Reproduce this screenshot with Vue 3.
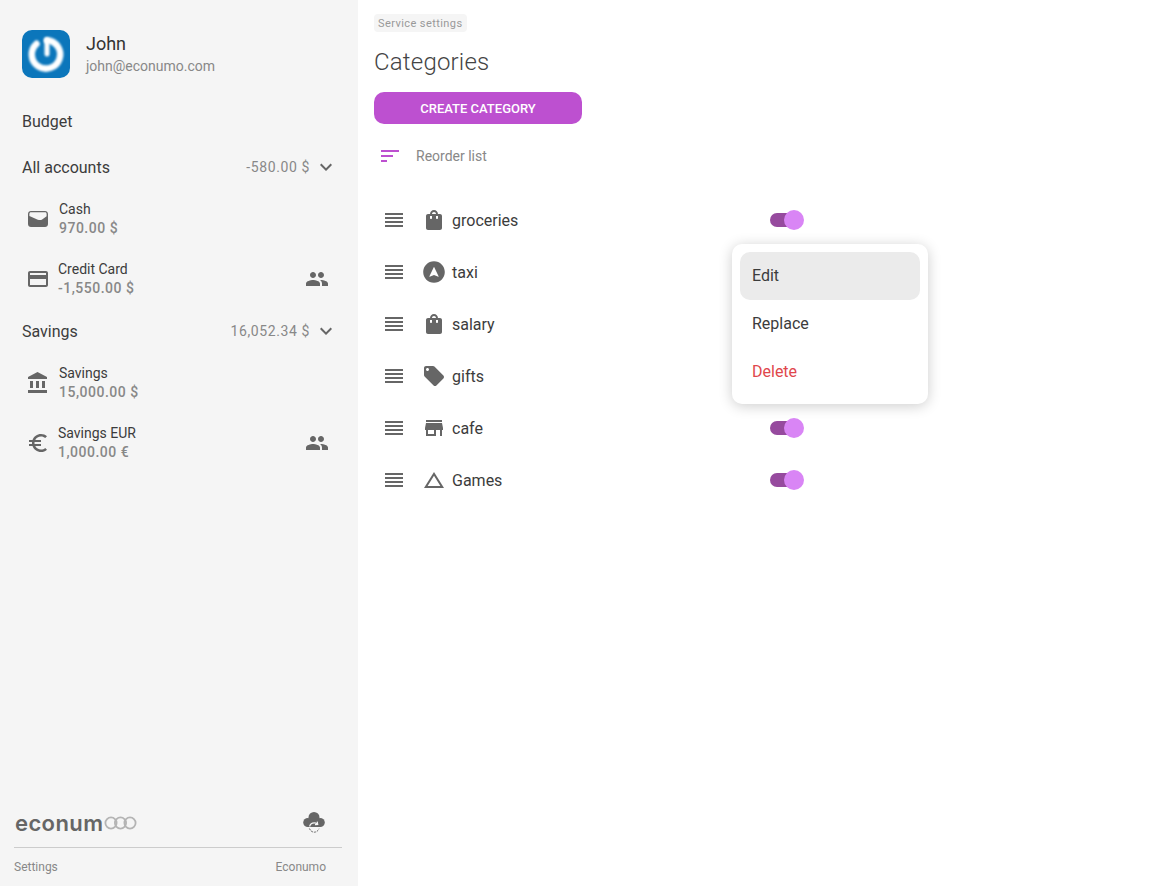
<script setup>
const icons = {
  bag: "M18 6h-2c0-2.21-1.79-4-4-4S8 3.79 8 6H6c-1.1 0-2 .9-2 2v12c0 1.1.9 2 2 2h12c1.1 0 2-.9 2-2V8c0-1.1-.9-2-2-2zm-8 4c0 .55-.45 1-1 1s-1-.45-1-1V8h2v2zm2-6c1.1 0 2 .9 2 2h-4c0-1.1.9-2 2-2zm4 6c0 .55-.45 1-1 1s-1-.45-1-1V8h2v2z",
  nav: "M12 1.2C6.04 1.2 1.2 6.04 1.2 12S6.04 22.8 12 22.8 22.8 17.96 22.8 12 17.96 1.2 12 1.2zm4.3 15.6L12 15l-4.3 1.8-.4-.4L12 6.8l4.7 9.6-.4.4z",
  tag: "M21.41 11.58l-9-9C12.05 2.22 11.55 2 11 2H4c-1.1 0-2 .9-2 2v7c0 .55.22 1.05.59 1.42l9 9c.36.36.86.58 1.41.58.55 0 1.05-.22 1.41-.59l7-7c.37-.36.59-.86.59-1.41 0-.55-.23-1.06-.59-1.42zM5.5 7C4.67 7 4 6.33 4 5.5S4.67 4 5.5 4 7 4.67 7 5.5 6.33 7 5.5 7z",
  store: "M20 4H4v2h16V4zm1 10v-2l-1-5H4l-1 5v2h1v6h10v-6h4v6h2v-6h1zm-9 4H6v-4h6v4z",
  triangle: "M12 7.77L18.39 18H5.61L12 7.77M12 4L2 20h20L12 4z",
  wallet: "M5 4h14c1.7 0 3 1.3 3 3v10c0 1.7-1.3 3-3 3H5c-1.7 0-3-1.3-3-3V7c0-1.7 1.3-3 3-3zM5 5.300c-.9 0-1.600.7-1.600 1.600V9l8.400 3.700c1.500.5 2.800.5 4 0l4.800-3.400V6.900c0-.9-.7-1.600-1.600-1.600H5z",
  card: "M20 4H4c-1.11 0-1.99.89-1.99 2L2 18c0 1.11.89 2 2 2h16c1.11 0 2-.89 2-2V6c0-1.11-.89-2-2-2zm0 14H4v-6h16v6zm0-10H4V6h16v2z",
  bank: "M4 10v7h3v-7H4zm6 0v7h3v-7h-3zM2 22h19v-3H2v3zm14-12v7h3v-7h-3zm-4.5-9L2 6v2h19V6l-9.5-5z",
  euro: "M15 18.5c-2.51 0-4.68-1.42-5.76-3.5H15v-2H8.58c-.05-.33-.08-.66-.08-1s.03-.67.08-1H15V9H9.24C10.32 6.92 12.5 5.5 15 5.5c1.61 0 3.09.59 4.23 1.57L21 5.3C19.41 3.87 17.3 3 15 3c-3.92 0-7.24 2.51-8.48 6H3v2h3.06c-.04.33-.06.66-.06 1 0 .34.02.67.06 1H3v2h3.52c1.24 3.49 4.56 6 8.48 6 2.31 0 4.41-.87 6-2.3l-1.78-1.77c-1.13.98-2.6 1.57-4.22 1.57z",
  people: "M16 11c1.66 0 2.99-1.34 2.99-3S17.66 5 16 5c-1.66 0-3 1.34-3 3s1.34 3 3 3zm-8 0c1.66 0 2.99-1.34 2.99-3S9.66 5 8 5C6.34 5 5 6.34 5 8s1.34 3 3 3zm0 2c-2.33 0-7 1.17-7 3.5V19h14v-2.5c0-2.33-4.67-3.5-7-3.5zm8 0c-.29 0-.62.02-.97.05 1.16.84 1.97 1.97 1.97 3.45V19h6v-2.5c0-2.33-4.67-3.5-7-3.5z",
  chevron: "M16.59 8.59L12 13.17 7.41 8.59 6 10l6 6 6-6z",
  sort: "M3 18h6v-2H3v2zM3 6v2h18V6H3zm0 7h12v-2H3v2z",
  drag: "M3 15h18v-2H3v2zm0 4h18v-2H3v2zm0-8h18V9H3v2zm0-6v2h18V5H3z",
};

const groups = [
  {
    name: "All accounts",
    total: "-580.00 $",
    accounts: [
      { name: "Cash", amount: "970.00 $", icon: "wallet", shared: false, narrow: false },
      { name: "Credit Card", amount: "-1,550.00 $", icon: "card", shared: true, narrow: true },
    ],
  },
  {
    name: "Savings",
    total: "16,052.34 $",
    accounts: [
      { name: "Savings", amount: "15,000.00 $", icon: "bank", shared: false, narrow: false },
      { name: "Savings EUR", amount: "1,000.00 €", icon: "euro", shared: true, narrow: true },
    ],
  },
];

const categories = [
  { name: "groceries", icon: "bag" },
  { name: "taxi", icon: "nav" },
  { name: "salary", icon: "bag" },
  { name: "gifts", icon: "tag" },
  { name: "cafe", icon: "store" },
  { name: "Games", icon: "triangle" },
];
</script>

<template>
  <div class="app">
    <aside class="sidebar">
      <div class="profile">
        <div class="avatar">
          <svg width="48" height="48" viewBox="0 0 48 48">
            <path class="power" d="M14.5 13.8A14.200 14.200 0 1 0 25 10.200" />
            <path class="power stem" d="M25 10.200V24" />
          </svg>
        </div>
        <div class="profile-text">
          <div class="profile-name">John</div>
          <div class="profile-mail">john@econumo.com</div>
        </div>
      </div>

      <div class="budget">Budget</div>

      <section v-for="group in groups" :key="group.name">
        <div class="group-head">
          <span class="group-name">{{ group.name }}</span>
          <span class="group-total">{{ group.total }}</span>
          <svg class="icon chevron" viewBox="0 0 24 24"><path :d="icons.chevron" /></svg>
        </div>
        <div class="account" v-for="acc in group.accounts" :key="acc.name">
          <svg class="icon account-icon" viewBox="0 0 24 24"><path :d="icons[acc.icon]" /></svg>
          <div class="account-text" :class="{ narrow: acc.narrow }">
            <div class="account-name">{{ acc.name }}</div>
            <div class="account-amount">{{ acc.amount }}</div>
          </div>
          <svg v-if="acc.shared" class="icon shared" viewBox="0 0 24 24"><path :d="icons.people" /></svg>
        </div>
      </section>

      <footer class="side-footer">
        <div class="brand">
          <span class="logo-text">econum</span>
          <svg class="logo-rings" width="33" height="14" viewBox="0 0 33 14">
            <circle cx="7" cy="7" r="5.6" />
            <circle cx="16.5" cy="7" r="5.6" />
            <circle cx="26" cy="7" r="5.6" />
          </svg>
          <svg class="cloud" width="24" height="24" viewBox="0 0 24 24">
            <circle cx="12" cy="6.500" r="5.500" />
            <circle cx="5.800" cy="11.500" r="4.600" />
            <circle cx="18.200" cy="11.500" r="4.600" />
            <rect x="5.800" y="8" width="12.400" height="8" />
            <path class="sync" d="M7.600 15.500c.6-2.300 2.400-3.700 4.600-3.700 1.300 0 2.400.5 3.300 1.300M16.800 15.500" />
            <path class="sync" d="M15.200 10.700l.5 2.700-2.700.2" />
            <path class="sync-dash" d="M7.400 17.500c1 2.300 2.800 3.700 4.900 3.700 2 0 3.900-1.300 4.700-3.500" />
          </svg>
        </div>
        <div class="side-links">
          <span>Settings</span>
          <span>Econumo</span>
        </div>
      </footer>
    </aside>

    <main class="content">
      <div class="crumb-row"><span class="crumb">Service settings</span></div>
      <h1 class="title">Categories</h1>
      <button class="create" type="button">Create category</button>
      <div class="reorder">
        <svg class="icon sort" viewBox="0 0 24 24"><path :d="icons.sort" /></svg>
        <span>Reorder list</span>
      </div>
      <ul class="list">
        <li class="row" v-for="cat in categories" :key="cat.name">
          <svg class="icon drag" viewBox="0 0 24 24"><path :d="icons.drag" /></svg>
          <svg class="icon cat-icon" viewBox="0 0 24 24"><path :d="icons[cat.icon]" /></svg>
          <span class="cat-name">{{ cat.name }}</span>
          <span class="toggle"><span class="thumb"></span></span>
        </li>
      </ul>

      <div class="menu">
        <div class="menu-item active">Edit</div>
        <div class="menu-item">Replace</div>
        <div class="menu-item danger">Delete</div>
      </div>
    </main>
  </div>
</template>

<style>
html,
body {
  margin: 0;
  background: #fff;
}
</style>

<style scoped>
.app {
  display: flex;
  height: 886px;
  overflow: hidden;
  font-family: Roboto, "Liberation Sans", sans-serif;
  color: #3c3c3c;
}

.icon {
  display: block;
  width: 24px;
  height: 24px;
  flex: none;
  fill: #666;
}

/* sidebar */
.sidebar {
  width: 358px;
  flex: none;
  box-sizing: border-box;
  padding-top: 30px;
  background: #f5f5f5;
  display: flex;
  flex-direction: column;
}

.profile {
  display: flex;
  align-items: center;
  height: 48px;
  padding-left: 22px;
}

.avatar {
  width: 48px;
  height: 48px;
  border-radius: 10px;
  background: #0b76bb;
  flex: none;
}

.power {
  fill: none;
  stroke: #fff;
  stroke-width: 6.5;
  stroke-linecap: round;
  filter: blur(0.8px);
}

.stem {
  stroke-width: 5;
}

.profile-text {
  margin-left: 16px;
}

.profile-name {
  font-size: 18px;
  line-height: 24px;
  color: #333;
}

.profile-mail {
  font-size: 14px;
  line-height: 20px;
  color: #888;
}

.budget {
  margin-top: 22px;
  height: 45px;
  line-height: 44px;
  padding-left: 22px;
  font-size: 16px;
  color: #3c3c3c;
}

.group-head {
  display: flex;
  align-items: center;
  height: 44px;
  padding-left: 22px;
  padding-right: 20px;
}

.group-name {
  flex: 1;
  font-size: 16px;
  color: #3c3c3c;
}

.group-total {
  font-size: 14px;
  letter-spacing: 0.6px;
  color: #888;
  margin-top: -1px;
}

.chevron {
  margin-left: 4px;
  margin-top: -1px;
}

.account {
  display: flex;
  align-items: center;
  height: 60px;
  padding-left: 26px;
  padding-right: 29px;
}

.account-text {
  flex: 1;
  margin-left: 9px;
}

.account-text.narrow {
  margin-left: 8px;
}

.account-name {
  font-size: 14px;
  line-height: 19px;
  color: #3c3c3c;
}

.account-amount {
  font-size: 14px;
  line-height: 19px;
  font-weight: 500;
  letter-spacing: 0.5px;
  color: #888;
}

.shared {
  margin-left: 8px;
}

.side-footer {
  margin-top: auto;
  padding: 0 16px 0 14px;
}

.brand {
  display: flex;
  align-items: center;
  height: 48px;
  border-bottom: 1px solid #ccc;
}

.logo-text {
  margin-left: 1px;
  font-family: Inter, sans-serif;
  font-size: 22px;
  font-weight: 600;
  letter-spacing: 0.4px;
  color: #666;
}

.logo-rings {
  margin-left: 1px;
  fill: none;
  stroke: #b4b4b4;
  stroke-width: 1.8;
}

.cloud {
  margin-left: auto;
  margin-right: 16px;
  margin-top: -1px;
  fill: #666;
}

.sync {
  fill: none;
  stroke: #f5f5f5;
  stroke-width: 1.200;
}

.sync-dash {
  fill: none;
  stroke: #666;
  stroke-width: 1;
  stroke-dasharray: 2 1;
}

.side-links {
  display: flex;
  justify-content: space-between;
  align-items: center;
  height: 38px;
  padding-right: 16px;
  font-size: 12px;
  color: #888;
}

/* content */
.content {
  position: relative;
  flex: 1;
  padding: 14px 0 0 16px;
}

.crumb-row {
  height: 18px;
  display: flex;
}

.crumb {
  padding: 1px 4px 0;
  border-radius: 4px;
  background: #f5f5f5;
  font-size: 11px;
  line-height: 17px;
  letter-spacing: 0.42px;
  color: #999;
}

.title {
  margin: 14px 0 0;
  font-size: 24px;
  line-height: 32px;
  font-weight: 300;
  letter-spacing: 0.2px;
  color: #444;
}

.create {
  display: block;
  width: 208px;
  height: 32px;
  margin-top: 14px;
  padding: 1px 0 0;
  border: 0;
  border-radius: 10px;
  background: #bd50d0;
  color: #fff;
  font-family: inherit;
  font-size: 13px;
  font-weight: 500;
  text-transform: uppercase;
}

.reorder {
  display: flex;
  align-items: center;
  height: 40px;
  margin-top: 12px;
  font-size: 14px;
  color: #888;
}

.sort {
  margin-left: 4px;
  margin-right: 14px;
  fill: #bd50d0;
}

.list {
  list-style: none;
  margin: 18px 0 0;
  padding: 0;
}

.row {
  display: flex;
  align-items: center;
  height: 52px;
  padding-left: 8px;
}

.drag {
  margin-right: 16px;
}

.cat-icon {
  margin-right: 6px;
}

.cat-name {
  width: 318px;
  font-size: 16px;
  color: #3c3c3c;
}

.toggle {
  position: relative;
  display: block;
  width: 27px;
  height: 14px;
  border-radius: 7px;
  background: #964a9e;
}

.thumb {
  position: absolute;
  top: -3px;
  left: 14px;
  width: 20px;
  height: 20px;
  border-radius: 50%;
  background: #d985f5;
}

.menu {
  position: absolute;
  left: 374px;
  top: 244px;
  width: 196px;
  box-sizing: border-box;
  padding: 8px;
  border-radius: 10px;
  background: #fff;
  box-shadow: 0 2px 14px rgba(0, 0, 0, 0.2);
}

.menu-item {
  height: 48px;
  line-height: 48px;
  padding-left: 12px;
  border-radius: 10px;
  font-size: 16px;
  color: #3c3c3c;
}

.menu-item.active {
  background: #ebebeb;
}

.menu-item.danger {
  color: #e0474c;
}
</style>
